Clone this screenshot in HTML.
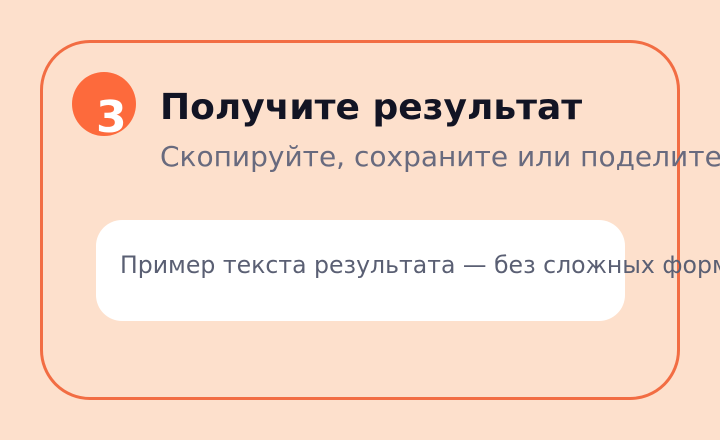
<!DOCTYPE html>
<html><head><meta charset="utf-8"><style>
body{margin:0;width:720px;height:440px;background:#fde0cc;overflow:hidden;position:relative;font-family:"DejaVu Sans","Liberation Sans",sans-serif}
.card{position:absolute;left:40px;top:40px;width:634px;height:354px;border:3px solid #f26d43;border-radius:50px}
.c{position:absolute;left:72px;top:72px;width:64px;height:64px;border-radius:50%;background:#fd6a3c}
.n{position:absolute;left:96px;top:92px;font-size:44px;font-weight:bold;color:#fff;line-height:52px}
.t{position:absolute;left:160px;top:85px;font-size:36px;font-weight:bold;color:#121424;white-space:nowrap;line-height:46px}
.s{position:absolute;left:160px;top:139px;font-size:28px;color:#686a7e;white-space:nowrap;line-height:36px}
.b{position:absolute;left:96px;top:220px;width:529px;height:101px;background:#fff;border-radius:26px}
.bt{position:absolute;left:120px;top:251px;font-size:23.6px;color:#5a5f73;white-space:nowrap;line-height:28px}
</style></head><body>
<div class="card"></div>
<div class="c"></div><div class="n">3</div>
<div class="t">Получите результат</div>
<div class="s">Скопируйте, сохраните или поделитесь</div>
<div class="b"></div>
<div class="bt">Пример текста результата — без сложных форматов</div>
</body></html>
